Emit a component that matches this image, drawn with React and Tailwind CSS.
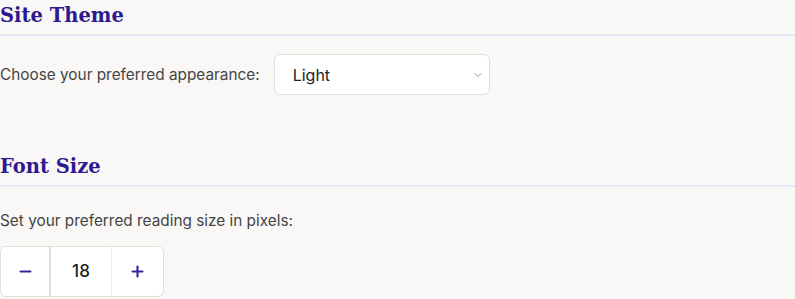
import { ChevronDown, Minus, Plus } from "lucide-react";

const Heading = ({ children }) => (
  <h2 className="font-['DejaVu_Serif',serif] font-bold text-[19.5px] leading-[26px] text-[#2e1a8f] pt-[3px] pb-[5px] border-b-2 border-[#ebe6f6]">
    {children}
  </h2>
);

export default function App() {
  return (
    <div className="min-h-[299px] bg-[#f9f8f7] font-['Inter',sans-serif] text-[#444]">
      <section>
        <Heading>Site Theme</Heading>
        <div className="flex items-center gap-[14px] mt-[18px]">
          <label className="text-[15.35px]">Choose your preferred appearance:</label>
          <div className="relative w-[216px] h-[41px] bg-white border border-[#e3ded8] rounded-[6px] flex items-center pl-[18px]">
            <span className="text-[16px] text-[#222]">Light</span>
            <ChevronDown size={12} className="absolute right-[5px] top-[14px] text-[#777]" strokeWidth={1.5} />
          </div>
        </div>
      </section>

      <section className="mt-[56px]">
        <Heading>Font Size</Heading>
        <p className="text-[15.35px] mt-[22px]">Set your preferred reading size in pixels:</p>
        <div className="mt-[14px] flex w-[164px] h-[51px] bg-white border border-[#e3ded8] rounded-[6px] overflow-hidden">
          <button className="w-[50px] flex items-center justify-center border-r-2 border-[#e3ded8] text-[#3b22a0]">
            <Minus size={17} strokeWidth={3} />
          </button>
          <div className="w-[61px] flex items-center justify-center text-[17px] font-medium text-[#222] border-r border-[#f1efec]">18</div>
          <button className="flex-1 flex items-center justify-center text-[#3b22a0]">
            <Plus size={17} strokeWidth={3} />
          </button>
        </div>
      </section>
    </div>
  );
}
